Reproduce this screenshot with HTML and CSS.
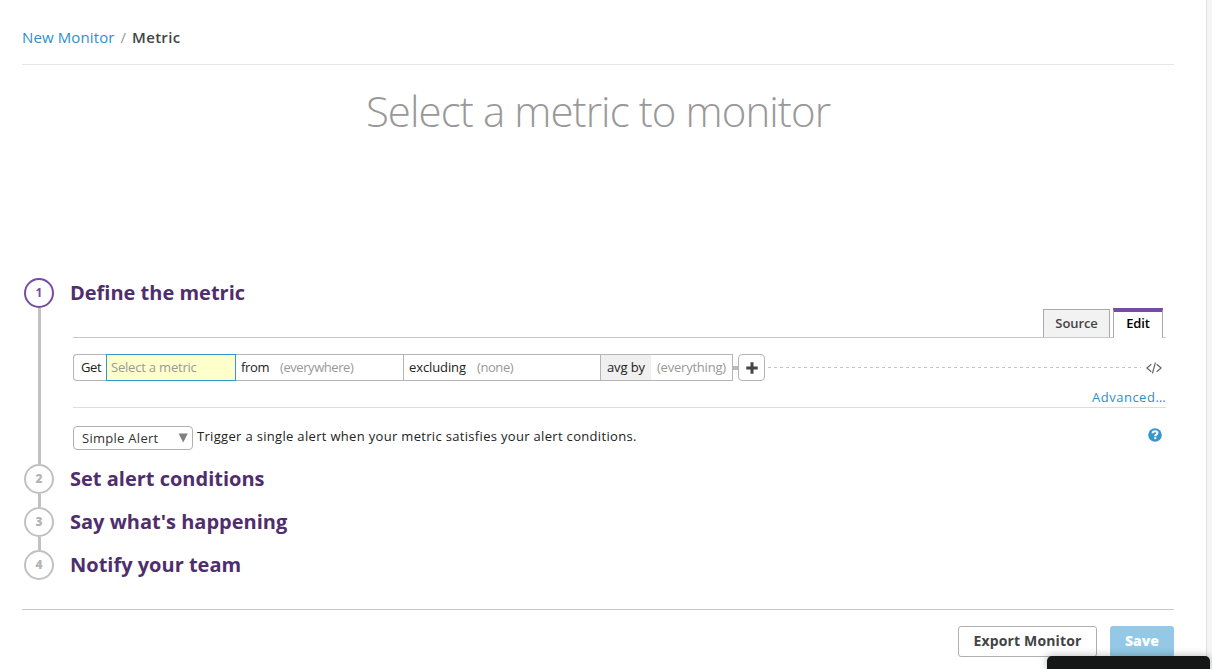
FILE: index.html
```html
<!DOCTYPE html>
<html lang="en">
<head>
<meta charset="utf-8">
<title>New Monitor / Metric</title>
<link rel="stylesheet" href="styles.css">
</head>
<body>
<main class="page">
  <nav class="breadcrumb"><a class="crumb-link" href="#">New Monitor</a><span class="crumb-sep">/</span><span class="crumb-current">Metric</span></nav>
  <header class="hero"><h1>Select a metric to monitor</h1></header>

  <ol class="steps">
    <li class="step step-open">
      <div class="rail"><span class="num num-active">1</span></div>
      <section class="step-main">
        <h2>Define the metric</h2>
        <div class="tabs"><span class="tab">Source</span><span class="tab tab-active">Edit</span></div>
        <div class="query">
          <div class="cell cell-get">Get</div>
          <div class="cell cell-metric">Select a metric</div>
          <div class="cell cell-from"><span class="w-from">from</span><span class="muted everywhere">(everywhere)</span></div>
          <div class="cell cell-excl"><span class="w-excl">excluding</span><span class="muted none">(none)</span></div>
          <div class="cell cell-avg"><span class="avg">avg by</span><span class="muted every">(everything)</span></div>
          <span class="link-bar"></span>
          <button class="plus" aria-label="Add"><svg width="12" height="12" viewBox="0 0 12 12"><path d="M6 .3v11.4M.3 6h11.4" stroke="#444" stroke-width="3"/></svg></button>
          <svg class="dash" width="373" height="1"><path d="M0 .5h373" stroke="#c4c4c4" stroke-dasharray="3 3"/></svg>
          <svg class="code" width="16" height="12" viewBox="0 0 16 12" fill="none" stroke="#666" stroke-width="1.25"><path d="M5.3 2.2.9 6l4.4 3.8M10.7 2.2 15.1 6l-4.4 3.8M9.4.6 6.4 11.4"/></svg>
        </div>
        <div class="advanced"><a href="#">Advanced…</a></div>
        <div class="alert-row">
          <div class="select"><span>Simple Alert</span><svg width="10" height="10" viewBox="0 0 10 10"><path d="M.6.4h9.2L5.2 9.4z" fill="#808080"/></svg></div>
          <p class="trigger">Trigger a single alert when your metric satisfies your alert conditions.</p>
          <svg class="help" width="14" height="14" viewBox="0 0 14 14"><circle cx="7" cy="7" r="6.8" fill="#3598cc"/><path d="M4.5 5.3C4.6 3.8 5.7 3.2 7.1 3.2c1.4 0 2.3.7 2.3 1.8 0 1.7-2.2 1.6-2.2 3.2" fill="none" stroke="#fff" stroke-width="2"/><path d="M6.2 9.2h2.1v1.9H6.2z" fill="#fff"/></svg>
        </div>
      </section>
    </li>
    <li class="step"><div class="rail"><span class="num">2</span></div><h2>Set alert conditions</h2></li>
    <li class="step"><div class="rail"><span class="num">3</span></div><h2>Say what's happening</h2></li>
    <li class="step step-last"><div class="rail"><span class="num">4</span></div><h2>Notify your team</h2></li>
  </ol>

  <footer class="actions"><button class="btn btn-export">Export Monitor</button><button class="btn btn-save">Save</button></footer>
</main>
<div class="dock"></div>
</body>
</html>
```
FILE: styles.css
```css
* { box-sizing: border-box; }
body { margin: 0; height: 669px; overflow: hidden; background: #f5f5f5; color: #222; font: 13px/18px "Open Sans", "Noto Sans", sans-serif; }
a { color: #2f8fc6; text-decoration: none; }
h1, h2, p, ol { margin: 0; padding: 0; font-weight: normal; }
button { font: inherit; padding: 0; margin: 0; }
svg { display: block; flex: none; }

.page { width: 1207px; height: 669px; padding: 0 32px 0 22px; background: #fff; border-right: 1px solid #e0e0e0; }
.breadcrumb { display: flex; height: 65px; padding-top: 27px; border-bottom: 1px solid #e5e5e5; font-size: 15px; line-height: 20px; }
.crumb-link { letter-spacing: .12px; }
.crumb-sep { margin: 0 6px; color: #999; }
.crumb-current { font-weight: 600; letter-spacing: .3px; color: #444; }
.hero { height: 213px; padding-top: 16px; text-align: center; }
.hero h1 { font-size: 42px; line-height: 60px; font-weight: 300; letter-spacing: -.92px; color: #999; }

.steps { list-style: none; height: 331px; }
.step { display: flex; height: 43px; }
.step-open { height: 186px; }
.step-last { height: 30px; }
.rail { width: 34px; flex: none; display: flex; flex-direction: column; align-items: center; margin-right: 14px; }
.rail::after { content: ""; flex: 1; width: 3px; margin-left: 1px; background: #c1c1c1; }
.step-last .rail::after { display: none; }
.num { display: flex; align-items: center; justify-content: center; width: 30px; height: 30px; flex: none; border: 2px solid #c1c1c1; border-radius: 50%; color: #b5b5b5; font-size: 12px; font-weight: 800; }
.num-active { border-color: #774aa4; color: #774aa4; font-weight: 700; }
h2 { font-size: 20px; line-height: 30px; font-weight: 700; color: #4f2e6e; }

.step-main { width: 1096px; }
.tabs { display: flex; justify-content: flex-end; align-items: flex-end; height: 30px; margin-left: 3px; padding-right: 3px; border-bottom: 1px solid #c8c8c8; gap: 3px; }
.tab { width: 67px; height: 28px; border: 1px solid #aaa; border-bottom: 0; background: #f2f2f2; text-align: center; font-size: 13px; line-height: 27px; font-weight: 600; letter-spacing: -.1px; color: #444; }
.tab-active { width: 50px; height: 30px; border-top: 4px solid #774aa4; background: #fff; color: #000; margin-bottom: -1px; line-height: 22px; }

.query { display: flex; align-items: center; height: 27px; margin: 16px 0 0 3px; }
.cell { height: 27px; border: 1px solid #b5b5b5; border-left: 0; line-height: 25px; white-space: nowrap; display: flex; }
.cell-get { width: 33px; border-left: 1px solid #b5b5b5; border-right: 0; border-radius: 4px 0 0 4px; padding-left: 7px; letter-spacing: -.4px; }
.cell-metric { width: 130px; border: 1px solid #3598cc; background: #ffffcb; padding-left: 4px; color: #999; letter-spacing: -.2px; }
.cell-from { width: 168px; padding-left: 5px; }
.cell-excl { width: 197px; padding-left: 5px; }
.cell-avg { width: 132px; }
.w-from { width: 39px; letter-spacing: -.3px; }
.w-excl { width: 68px; letter-spacing: -.1px; }
.muted { color: #999; }
.everywhere, .none { letter-spacing: -.43px; }
.avg { width: 50px; background: #f0f0f0; padding-left: 6px; letter-spacing: -.1px; }
.every { padding-left: 6px; letter-spacing: -.22px; }
.link-bar { width: 5px; height: 4px; background: #bbb; }
.plus { display: flex; align-items: center; justify-content: center; width: 27px; height: 27px; border: 1px solid #b5b5b5; border-radius: 4px; background: #fff; }
.dash { margin: 0 5px 0 3px; }

.advanced { height: 27px; margin-left: 3px; padding-top: 7px; border-bottom: 1px solid #ddd; text-align: right; letter-spacing: .5px; }
.alert-row { display: flex; margin-left: 3px; padding-top: 18px; }
.select { display: flex; justify-content: space-between; align-items: center; width: 120px; height: 24px; padding: 0 4px 0 8px; border: 1px solid #b0b0b0; border-radius: 4px; color: #333; letter-spacing: .28px; }
.trigger { flex: 1; margin-left: 4px; padding-top: 1px; letter-spacing: .32px; }
.help { margin: 2px 4px 0 0; }

.actions { display: flex; justify-content: flex-end; gap: 13px; padding-top: 16px; border-top: 1px solid #c8c8c8; }
.btn { height: 31px; padding-bottom: 2px; border-radius: 3px; font-size: 14px; font-weight: 700; line-height: 26px; }
.btn-export { width: 139px; border: 1px solid #b0b0b0; background: #fff; color: #444; letter-spacing: .15px; }
.btn-save { width: 64px; border: 0; background: #93c9e6; color: #fff; font-weight: 800; }
.dock { position: absolute; left: 1047px; top: 656px; width: 163px; height: 13px; border-radius: 5px 5px 0 0; background: #151716; box-shadow: 0 0 8px rgba(0,0,0,.3); }
```
